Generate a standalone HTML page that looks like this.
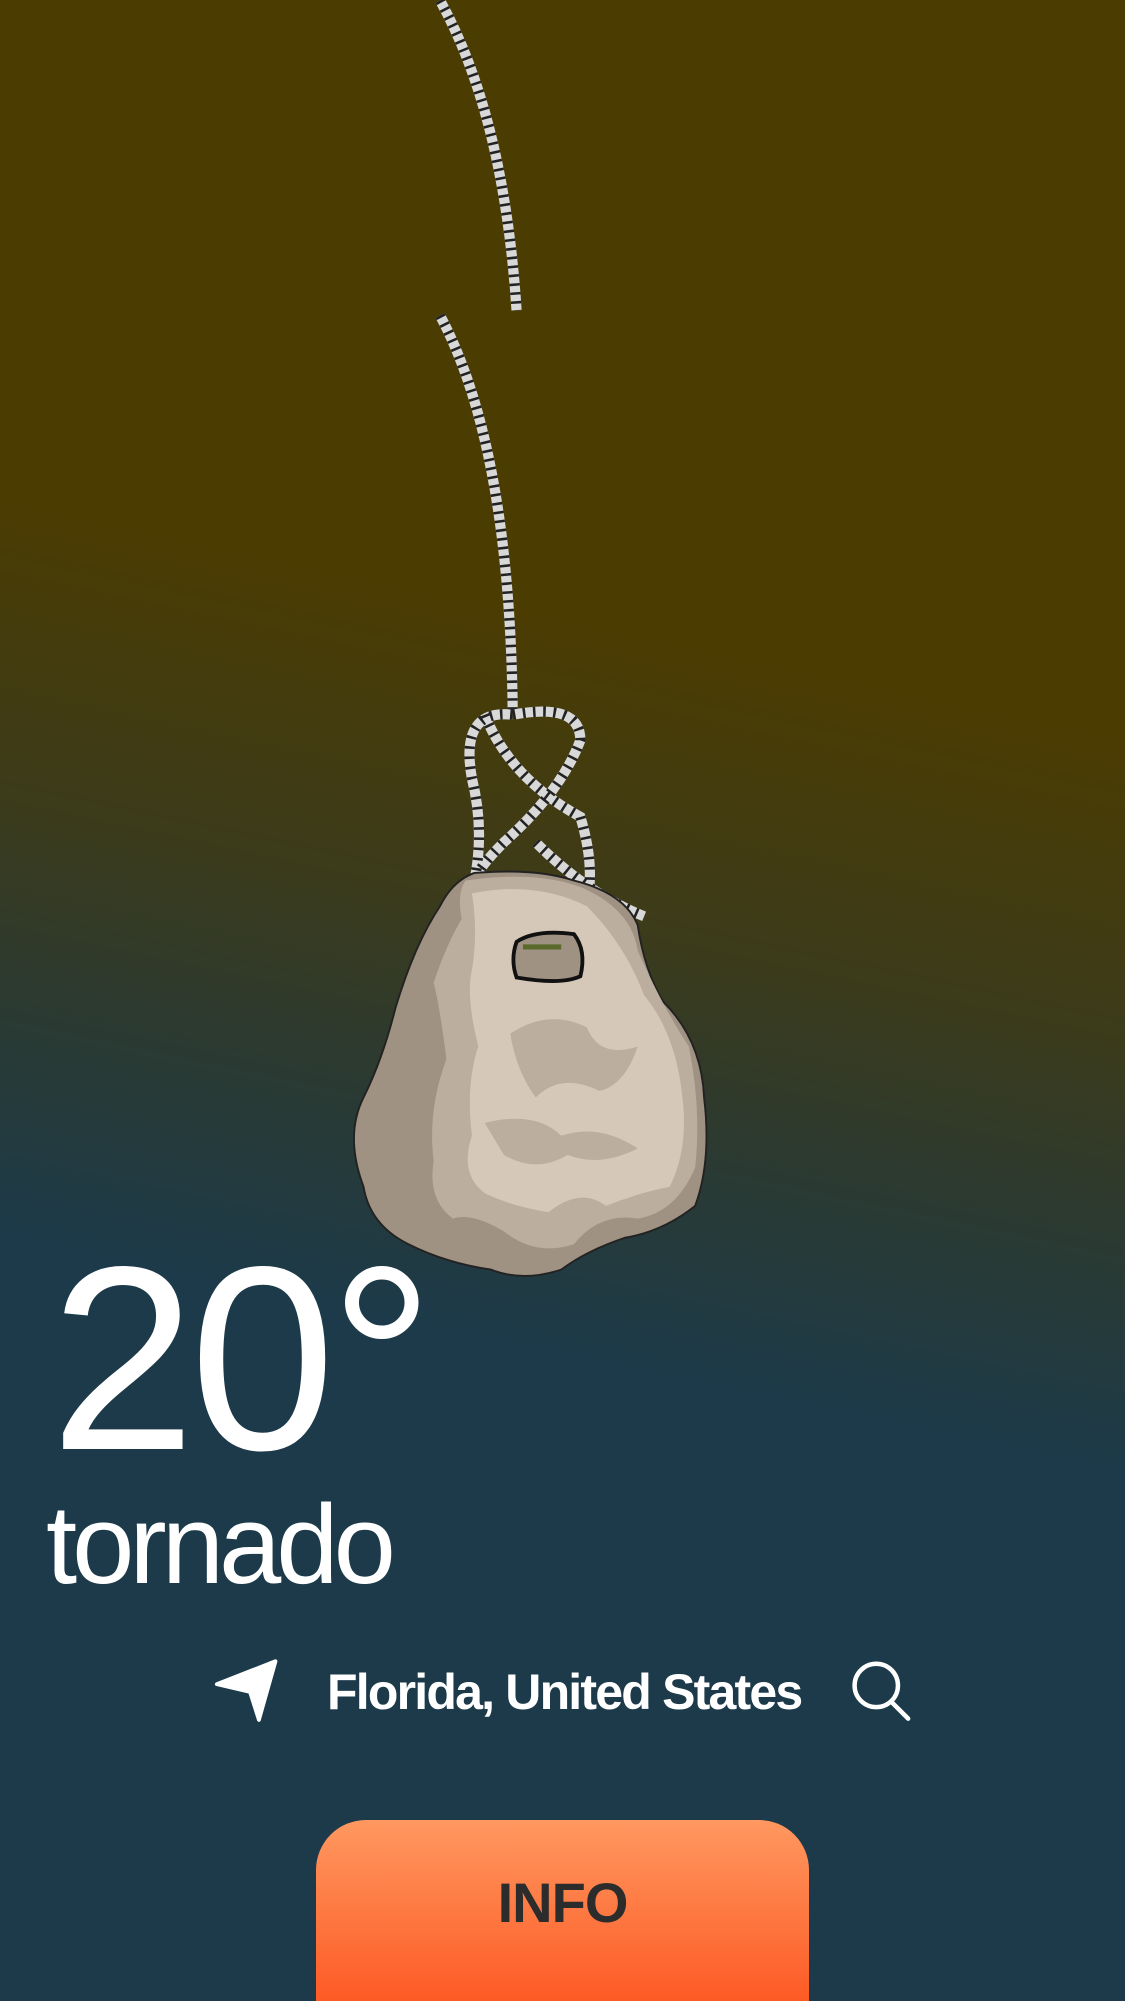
<!DOCTYPE html>
<html><head><meta charset="utf-8">
<style>
html,body{margin:0;padding:0;width:1125px;height:2001px;overflow:hidden;background:#1c3a4a}
body{position:relative;font-family:"Liberation Sans",sans-serif}
#bg{position:absolute;left:0;top:0;width:1125px;height:2001px;
background:linear-gradient(192deg,#4b3c02 0%,#4b3c02 33%,#3c3b1a 46%,#2a3a33 56%,#1c3a4a 66%,#1c3a4a 100%);}
.t{position:absolute;color:#fff;white-space:nowrap}
#temp{left:50px;top:1228px;font-size:262px;line-height:262px;font-weight:normal;letter-spacing:-6px}
#cond{left:46px;top:1480px;font-size:112px;line-height:130px;letter-spacing:-5px}
#loc{left:327px;top:1662px;font-size:50px;line-height:60px;font-weight:bold;letter-spacing:-1.8px}
#btn{position:absolute;left:316px;top:1820px;width:493px;height:260px;border-radius:50px;background:linear-gradient(#ff9860,#fe5a25 70%)}
#btn span{position:absolute;left:0;right:0;top:50px;text-align:center;font-size:56px;font-weight:bold;color:#2c2c2c;letter-spacing:-1px}
svg{position:absolute;left:0;top:0}
</style></head><body>
<div id="bg"></div>
<svg width="1125" height="2001" viewBox="0 0 882 1568">
<g fill="none" stroke-linecap="butt">
 <path d="M345 0 Q395 90 405 243" stroke="#d8d8d8" stroke-width="8"/>
 <path d="M345 0 Q395 90 405 243" stroke="#222" stroke-width="8" stroke-dasharray="2 5"/>
 <path d="M345 247 Q400 350 402 560" stroke="#d8d8d8" stroke-width="8"/>
 <path d="M345 247 Q400 350 402 560" stroke="#222" stroke-width="8" stroke-dasharray="2 5"/>
 <g stroke="#d8d8d8" stroke-width="8">
  <path d="M402 560 Q360 555 370 610 Q380 650 372 690"/>
  <path d="M402 560 Q455 550 455 580 Q440 620 395 660 Q375 680 372 690"/>
  <path d="M380 560 Q400 610 455 640 Q470 690 455 720 Q430 735 415 740"/>
  <path d="M420 660 Q460 700 505 718"/>
 </g>
 <g stroke="#222" stroke-width="8" stroke-dasharray="2 6">
  <path d="M402 560 Q360 555 370 610 Q380 650 372 690"/>
  <path d="M402 560 Q455 550 455 580 Q440 620 395 660 Q375 680 372 690"/>
  <path d="M380 560 Q400 610 455 640 Q470 690 455 720 Q430 735 415 740"/>
  <path d="M420 660 Q460 700 505 718"/>
 </g>
</g>
<path d="M372 684 Q420 680 450 690 Q490 700 500 725 Q505 760 520 785 Q550 815 552 860 Q558 910 545 945 Q520 965 490 970 Q460 980 440 995 Q410 1005 385 995 Q350 990 320 975 Q290 960 285 930 Q270 890 285 860 Q300 830 310 790 Q325 740 345 710 Q355 690 372 684Z" fill="#a09282" stroke="#222" stroke-width="1.5"/>
<path d="M365 690 Q420 682 455 695 Q495 712 500 745 Q520 790 540 820 Q550 870 545 915 Q530 950 500 955 Q470 950 450 975 Q420 985 395 965 Q370 950 355 955 Q335 940 340 910 Q335 870 350 830 Q345 790 340 770 Q350 740 362 720 Q358 700 365 690Z" fill="#bcae9f"/>
<path d="M370 700 Q420 690 460 710 Q490 740 505 780 Q530 810 535 860 Q540 900 525 930 Q500 935 475 945 Q455 930 430 950 Q400 945 380 935 Q360 920 370 890 Q365 850 375 820 Q365 780 370 760 Q375 730 370 700Z" fill="#d6c8b8"/>
<path d="M400 810 Q430 790 460 805 Q470 830 500 820 Q490 850 470 855 Q440 840 420 860 Q405 840 400 810Z M380 880 Q420 870 440 890 Q470 880 500 900 Q470 915 445 905 Q420 920 395 905Z" fill="#bcae9f"/>
<path d="M405 738 Q420 728 450 732 Q460 745 455 765 Q440 772 405 766 Q400 752 405 738Z" fill="#a09282" stroke="#111" stroke-width="3"/>
<path d="M410 742 L440 742" stroke="#5a6a2a" stroke-width="4"/>
<g fill="none" stroke="#fff" stroke-width="4" stroke-linejoin="round" stroke-linecap="round">
 <path d="M170 1320 L216 1302 L203 1348 L196 1326 Z" fill="#fff" stroke-width="3"/>
 <circle cx="687" cy="1321" r="17" stroke-width="3.5"/>
 <path d="M699 1334 L712 1347" stroke-width="3.5"/>
</g>
</svg>
<div class="t" id="temp">20°</div>
<div class="t" id="cond">tornado</div>
<div class="t" id="loc">Florida, United States</div>
<div id="btn"><span>INFO</span></div>
</body></html>
